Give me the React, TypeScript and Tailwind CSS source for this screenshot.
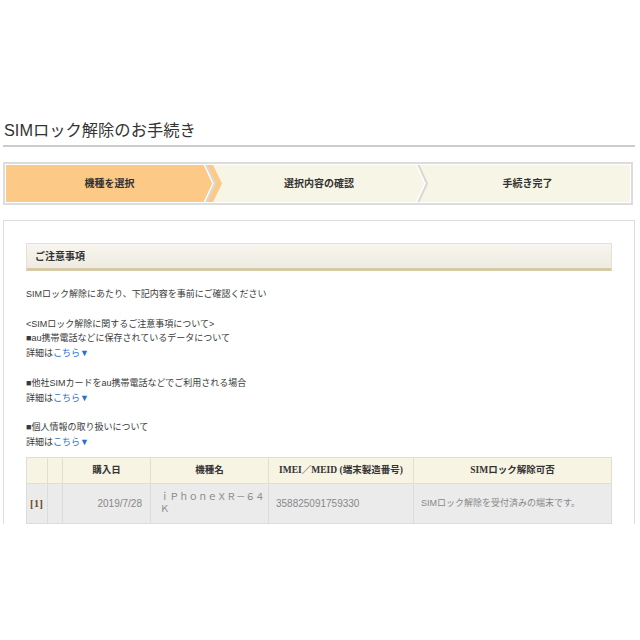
const jp = "font-['Liberation_Sans','Noto_Sans_CJK_JP',sans-serif]";
const serif = "font-['Liberation_Serif','Noto_Sans_CJK_JP',serif]";

const Chevron = ({ className }: { className: string }) => (
    <svg width="14" height="37" viewBox="0 0 14 37" className={className}>
        <polyline points="1,-1 10,18.5 1,38" stroke="#ffffff" strokeWidth="1.5" fill="none" />
        <polyline points="3,-1 12,18.5 3,38" stroke="#d8d8d8" strokeWidth="2" fill="none" />
    </svg>
);

const Detail = () => (
    <div>
        詳細は<span className="text-[#2a6fd3]">こちら▼</span>
    </div>
);

const App = () => {
    return (
        <div className={`w-[640px] h-[640px] bg-white text-[#333] pt-[117px] ${jp}`}>
            {/* title */}
            <div className="mx-[3px] w-[632px] border-b-2 border-[#cccccc] pb-[2px]">
                <h1 className="pl-px text-[16.3px] leading-[26px] font-normal text-[#333]">SIMロック解除のお手続き</h1>
            </div>

            {/* steps */}
            <div className="mx-[3px] mt-[15px] w-[630px] border-2 border-[#dcdcdc] bg-white p-px">
                <div className="flex h-[37px] bg-[#f7f5e5] text-[10px] font-bold text-[#333]">
                    <div className="relative flex w-[207px] items-center justify-center">
                        <svg width="217" height="37" viewBox="0 0 217 37" className="absolute left-0 top-0">
                            <polygon points="0,0 207,0 216,18.5 207,37 0,37" fill="#fdc987" />
                        </svg>
                        <Chevron className="absolute top-0 -right-[4px] z-10" />
                        <span className="relative">機種を選択</span>
                    </div>
                    <div className="relative flex w-[212px] items-center justify-center">
                        <Chevron className="absolute top-0 -right-[4px] z-10" />
                        <span>選択内容の確認</span>
                    </div>
                    <div className="flex flex-1 items-center justify-center">
                        <span>手続き完了</span>
                    </div>
                </div>
            </div>

            {/* content */}
            <div className="mx-[3px] mt-[15px] h-[304px] w-[632px] overflow-hidden border border-b-0 border-[#dddddd] px-[22px] pt-[22px]">
                <div className="flex h-[28px] items-center border border-[#e6e1d2] border-b-[3px] border-b-[#d4caa8] bg-gradient-to-b from-[#f7f5ef] to-[#efebe1] pl-[8px] text-[10px] font-bold text-[#333]">
                    ご注意事項
                </div>

                <div className="mt-[16px] text-[9px] leading-[14.8px] text-[#3a3a3a]">
                    <div>SIMロック解除にあたり、下記内容を事前にご確認ください</div>
                    <div>&nbsp;</div>
                    <div>&lt;SIMロック解除に関するご注意事項について&gt;</div>
                    <div>■au携帯電話などに保存されているデータについて</div>
                    <Detail />
                    <div>&nbsp;</div>
                    <div>■他社SIMカードをau携帯電話などでご利用される場合</div>
                    <Detail />
                    <div>&nbsp;</div>
                    <div>■個人情報の取り扱いについて</div>
                    <Detail />
                </div>

                <table className="mt-[7px] w-[586px] table-fixed border-collapse text-[9.5px]">
                    <colgroup>
                        <col className="w-[21px]" />
                        <col className="w-[15px]" />
                        <col className="w-[88px]" />
                        <col className="w-[118px]" />
                        <col className="w-[145px]" />
                        <col />
                    </colgroup>
                    <thead>
                        <tr className={`h-[26px] bg-[#f7f4e4] font-bold text-[#333] ${serif}`}>
                            <th className="border border-[#e2dfd2]"></th>
                            <th className="border border-[#e2dfd2]"></th>
                            <th className="border border-[#e2dfd2] text-center">購入日</th>
                            <th className="border border-[#e2dfd2] text-center">機種名</th>
                            <th className="border border-[#e2dfd2] text-center">IMEI／MEID (端末製造番号)</th>
                            <th className="border border-[#e2dfd2] text-center">SIMロック解除可否</th>
                        </tr>
                    </thead>
                    <tbody>
                        <tr className="h-[40px] bg-[#ebebeb] text-[#888]">
                            <td className={`border border-[#dcdcdc] pl-[3px] text-[11px] font-bold text-[#6b4a2a] ${serif}`}>[1]</td>
                            <td className="border border-[#dcdcdc]"></td>
                            <td className="border border-[#dcdcdc] pr-[8px] text-right text-[10px]">2019/7/28</td>
                            <td className="border border-[#dcdcdc] pl-[9px] pr-0 leading-[12px]">ｉＰｈｏｎｅＸＲ－６４Ｋ</td>
                            <td className="border border-[#dcdcdc] pl-[7px] text-[10px]">358825091759330</td>
                            <td className="border border-[#dcdcdc] pl-[7px] text-[9px]">SIMロック解除を受付済みの端末です。</td>
                        </tr>
                    </tbody>
                </table>
            </div>
        </div>
    );
};

export default App;
